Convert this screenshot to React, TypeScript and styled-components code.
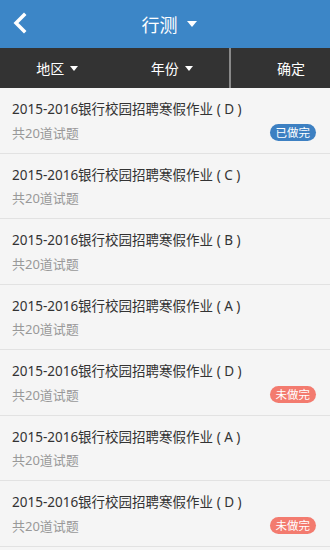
import React from "react";
import styled, { createGlobalStyle } from "styled-components";

const Global = createGlobalStyle`
  html, body { margin: 0; padding: 0; background: #f5f5f5; }
  body { font-family: "Noto Sans", "Noto Sans CJK SC", sans-serif; }
  * { box-sizing: border-box; }
`;

const Page = styled.div`
  width: 330px;
  height: 550px;
  overflow: hidden;
  display: flex;
  flex-direction: column;
  background: #f5f5f5;
`;

const Header = styled.div`
  height: 48px;
  background: #3c86c7;
  display: flex;
  align-items: center;
  position: relative;
  justify-content: center;
  flex-shrink: 0;
`;

const Back = styled.div`
  position: absolute;
  left: 12px;
  top: 12px;
  width: 16px;
  height: 22px;
  display: flex;
`;

const Title = styled.div`
  display: flex;
  align-items: center;
  gap: 9px;
  color: #fff;
  font-size: 18px;
  font-family: "Noto Sans CJK SC", sans-serif;
  margin-left: 8px;
`;

const Caret = styled.span<{ $size?: number }>`
  width: 0;
  height: 0;
  border-left: ${(p) => p.$size ?? 5}px solid transparent;
  border-right: ${(p) => p.$size ?? 5}px solid transparent;
  border-top: ${(p) => (p.$size ?? 5) + 1}px solid #fff;
  display: inline-block;
`;

const FilterBar = styled.div`
  height: 40px;
  background: #333333;
  display: flex;
  align-items: stretch;
  flex-shrink: 0;
`;

const FilterGroup = styled.div`
  width: 231px;
  display: flex;
  border-right: 2px solid #8a8a8a;
`;

const FilterItem = styled.div`
  flex: 1;
  display: flex;
  align-items: center;
  justify-content: center;
  gap: 6px;
  color: #fff;
  font-size: 14px;
  font-family: "Noto Sans CJK SC", sans-serif;
`;

const Confirm = styled.div`
  flex: 1;
  display: flex;
  align-items: center;
  justify-content: flex-end;
  padding-right: 25px;
  color: #fff;
  font-size: 14px;
  font-family: "Noto Sans CJK SC", sans-serif;
`;

const List = styled.div`
  display: flex;
  flex-direction: column;
`;

const Item = styled.div`
  height: 65.5px;
  flex-shrink: 0;
  border-bottom: 1px solid #e2e2e2;
  padding: 11px 14px 0 12px;
  display: flex;
  flex-direction: column;
`;

const ItemTitle = styled.div`
  font-size: 13.5px;
  color: #333;
  line-height: 20px;
  white-space: nowrap;
  font-family: "Noto Sans", "Noto Sans CJK SC", sans-serif;
`;

const Row = styled.div`
  display: flex;
  align-items: center;
  justify-content: space-between;
  margin-top: 3px;
  height: 20px;
`;

const Sub = styled.div`
  font-size: 13px;
  color: #999;
  font-family: "Noto Sans", "Noto Sans CJK SC", sans-serif;
`;

const Badge = styled.span<{ $done: boolean }>`
  background: ${(p) => (p.$done ? "#3d80c2" : "#f37b6f")};
  color: #fff;
  font-size: 11.5px;
  font-family: "Noto Sans CJK SC", sans-serif;
  height: 17px;
  line-height: 17px;
  padding: 0 6px;
  border-radius: 9px;
  margin-top: 1px;
`;

const items: { letter: string; status?: "done" | "todo" }[] = [
  { letter: "D", status: "done" },
  { letter: "C" },
  { letter: "B" },
  { letter: "A" },
  { letter: "D", status: "todo" },
  { letter: "A" },
  { letter: "D", status: "todo" },
];

export default function App() {
  return (
    <Page>
      <Global />
      <Header>
        <Back>
          <svg width="16" height="22" viewBox="0 0 16 22">
            <path d="M12 3 L4 11 L12 19" stroke="#fff" strokeWidth="3.5" fill="none" strokeLinecap="square" />
          </svg>
        </Back>
        <Title>
          行测
          <Caret $size={5} />
        </Title>
      </Header>
      <FilterBar>
        <FilterGroup>
          <FilterItem>
            地区 <Caret $size={4.5} />
          </FilterItem>
          <FilterItem>
            年份 <Caret $size={4.5} />
          </FilterItem>
        </FilterGroup>
        <Confirm>确定</Confirm>
      </FilterBar>
      <List>
        {items.map((it, i) => (
          <Item key={i}>
            <ItemTitle>2015-2016银行校园招聘寒假作业 (&nbsp;{it.letter}&nbsp;)</ItemTitle>
            <Row>
              <Sub>共20道试题</Sub>
              {it.status && <Badge $done={it.status === "done"}>{it.status === "done" ? "已做完" : "未做完"}</Badge>}
            </Row>
          </Item>
        ))}
      </List>
    </Page>
  );
}
